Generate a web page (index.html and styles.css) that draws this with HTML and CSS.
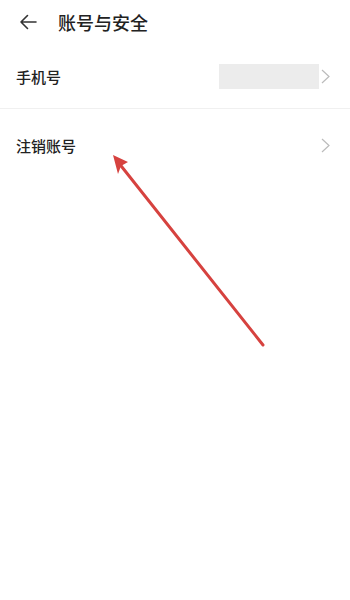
FILE: index.html
```html
<!DOCTYPE html>
<html>
<head>
<meta charset="UTF-8">
<title>账号与安全</title>
<link rel="stylesheet" href="styles.css">
</head>
<body>
<div id="page">
<div class="topbar">
<svg class="back" width="18" height="16" viewBox="0 0 18 16"><path d="M17 8H2M8.5 1.5L2 8l6.5 6.5" fill="none" stroke="#333" stroke-width="1.6" stroke-linecap="round" stroke-linejoin="round"/></svg>
<span class="title">账号与安全</span>
</div>
<div class="row">
<span class="label">手机号</span>
<span class="value"></span>
<svg class="chev" width="9" height="15" viewBox="0 0 9 15"><path d="M1 1l7 6.5L1 14" fill="none" stroke="#bbb" stroke-width="1.2"/></svg>
</div>
<div class="row noline">
<span class="label">注销账号</span>
<svg class="chev" width="9" height="15" viewBox="0 0 9 15"><path d="M1 1l7 6.5L1 14" fill="none" stroke="#bbb" stroke-width="1.2"/></svg>
</div>
<svg class="pointer" width="350" height="600" viewBox="0 0 350 600">
<line x1="263" y1="345" x2="118" y2="162" stroke="#d6423f" stroke-width="3" stroke-linecap="round"/>
<path d="M113 155L128 162L121 166L118 174Z" fill="#d6423f"/>
</svg>
</div>
</body>
</html>
```
FILE: styles.css
```css
body{margin:0;background:#fff;font-family:"Noto Sans CJK SC","Noto Sans",sans-serif;color:#222;}
#page{position:relative;width:350px;height:600px;overflow:hidden;}
.topbar{height:44px;display:flex;align-items:center;padding-left:19px;}
.back{margin-right:21px;}
.title{font-size:18px;font-weight:500;color:#222;}
.row{height:64px;display:flex;align-items:center;padding:0 20px 0 16px;border-bottom:1px solid #f0f0f0;}
.noline{border-bottom:none;height:72px;}
.label{font-size:15px;font-weight:500;flex:1;}
.value{width:100px;height:25px;background:#ececec;margin-right:2px;}
.pointer{position:absolute;left:0;top:0;pointer-events:none;}
```
